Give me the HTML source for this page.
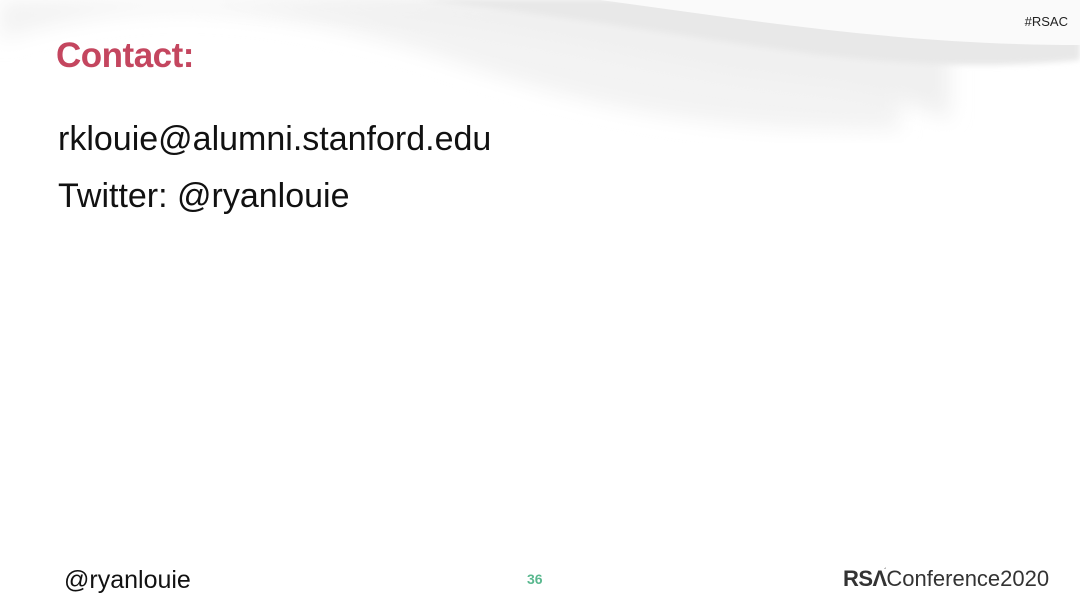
<!DOCTYPE html>
<html><head><meta charset="utf-8"><style>
body{margin:0;width:1080px;height:608px;overflow:hidden;background:#fff;position:relative;font-family:"Liberation Sans",sans-serif}
.t{position:absolute;white-space:nowrap}
</style></head><body>
<svg class="t" style="left:0;top:0" width="1080" height="170">
<defs>
<filter id="b"><feGaussianBlur stdDeviation="10"/></filter>
<filter id="b2"><feGaussianBlur stdDeviation="3"/></filter>
</defs>
<path d="M0 40 C150 -10 300 10 450 60 C600 110 700 130 900 130 L900 0 L0 0 Z" fill="#f3f3f3" filter="url(#b)"/>
<path d="M200 0 C400 10 550 40 700 70 C800 90 860 80 950 120 L950 0 Z" fill="#f0f0f0" filter="url(#b)"/>
<path d="M420 0 C600 20 700 40 820 55 C950 70 1030 65 1080 60 L1080 0 Z" fill="#e8e8e8" filter="url(#b2)"/>
<path d="M600 0 C750 20 900 45 1080 45 L1080 0 Z" fill="#fafafa"/>
</svg>
<div class="t" style="right:12px;top:14px;font-size:13px;color:#222">#RSAC</div>
<div class="t" style="left:56px;top:36px;font-size:35px;font-weight:bold;color:#c4465f;letter-spacing:-0.5px">Contact:</div>
<div class="t" style="left:58px;top:120px;font-size:34px;color:#111">rklouie@alumni.stanford.edu</div>
<div class="t" style="left:58px;top:177px;font-size:34px;color:#111">Twitter: @ryanlouie</div>
<div class="t" style="left:64px;top:566px;font-size:25px;color:#111">@ryanlouie</div>
<div class="t" style="left:527px;top:571px;font-size:14px;font-weight:bold;color:#5ab88f">36</div>
<div class="t" style="left:843px;top:566px;font-size:22px;color:#333"><b style="letter-spacing:-0.5px">RSΛ</b><span style="font-size:8px;position:relative;top:-12px;margin-left:-3px">ˊ</span>Conference2020</div>
</body></html>
